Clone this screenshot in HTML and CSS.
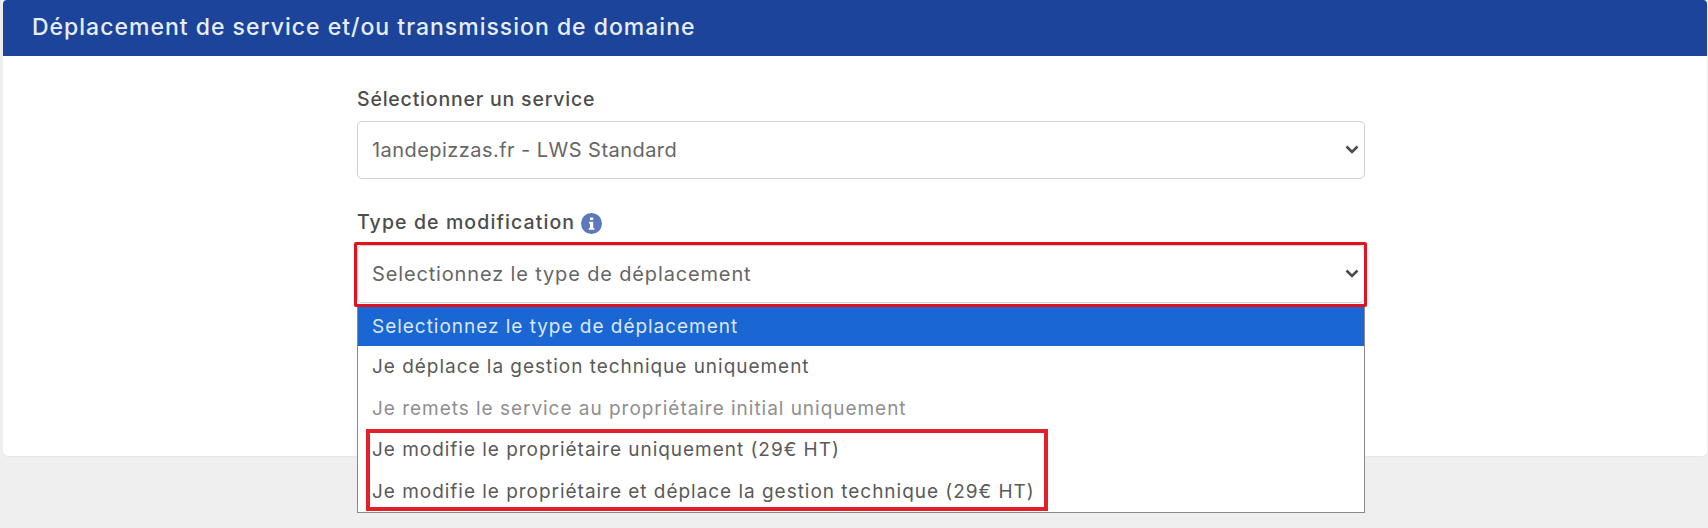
FILE: index.html
```html
<!DOCTYPE html>
<html lang="fr">
<head>
<meta charset="utf-8">
<title>Déplacement de service</title>
<link rel="stylesheet" href="styles.css">
</head>
<body>
<section class="card">
  <h1 class="card-title">Déplacement de service et/ou transmission de domaine</h1>
  <div class="card-body">
    <form class="form">
      <div class="field">
        <label class="label" for="service">Sélectionner un service</label>
        <div class="select-wrap">
          <select class="select select-service" id="service">
            <option>1andepizzas.fr - LWS Standard</option>
          </select>
          <svg class="chevron" viewBox="0 0 14 9" aria-hidden="true"><path d="M1.5 1.5 7 7l5.5-5.5" fill="none" stroke="#4a4a4a" stroke-width="2.6"/></svg>
        </div>
      </div>
      <div class="field field-type">
        <label class="label label-type" for="type">Type de modification
          <svg class="info" viewBox="0 0 22 22" aria-hidden="true"><circle cx="11" cy="11" r="11" fill="#5b78bd"/><path d="M9.4 4.6h3.4v2.8H9.4zM8.6 9.2h4.2v6.4h1.2v2H8.2v-2h1.2v-4.4h-.8z" fill="#fff"/></svg>
        </label>
        <div class="select-wrap">
          <select class="select" id="type">
            <option>Selectionnez le type de déplacement</option>
          </select>
          <svg class="chevron" viewBox="0 0 14 9" aria-hidden="true"><path d="M1.5 1.5 7 7l5.5-5.5" fill="none" stroke="#4a4a4a" stroke-width="2.6"/></svg>
          <span class="highlight highlight-select"></span>
          <ul class="options">
            <li class="option option-active">Selectionnez le type de déplacement</li>
            <li class="option">Je déplace la gestion technique uniquement</li>
            <li class="option option-disabled">Je remets le service au propriétaire initial uniquement</li>
            <li class="option">Je modifie le propriétaire uniquement (29€ HT)</li>
            <li class="option">Je modifie le propriétaire et déplace la gestion technique (29€ HT)</li>
          </ul>
          <span class="highlight highlight-options"></span>
        </div>
      </div>
    </form>
  </div>
</section>
</body>
</html>
```

FILE: styles.css
```css
* { box-sizing: border-box; }
html, body { height: 100%; }
body {
  margin: 0;
  background: #efefef;
  font-family: Inter, "Liberation Sans", sans-serif;
  color: #555;
  overflow: hidden;
}
.card {
  margin: 0 1px 0 3px;
  height: 456px;
  background: #fff;
  border-radius: 0 0 5px 5px;
  box-shadow: 0 1px 1px #e6e6e6;
}
.card-title {
  margin: 0;
  height: 56px;
  padding: 0 0 2px 29px;
  display: flex;
  align-items: center;
  background: #1c449b;
  color: #e6eefa;
  font-size: 23px;
  letter-spacing: 1px;
  font-weight: 500;
  border-radius: 4px 4px 0 0;
}
.card-body { display: flex; justify-content: center; padding: 30px 342px 0 354px; }
.form { width: 100%; }
.field { display: flex; flex-direction: column; }
.field-type { margin-top: 30.5px; }
.label {
  display: flex;
  align-items: center;
  gap: 6px;
  height: 35px;
  padding-bottom: 10px;
  font-size: 19.5px;
  letter-spacing: 0.8px;
  font-weight: 500;
  color: #4d4d4d;
}
.label-type { gap: 6px; letter-spacing: 1.1px; padding-bottom: 11px; }
.info { width: 21px; height: 21px; margin-top: 3px; }
.select {
  display: block;
  width: 100%;
  height: 58px;
  padding: 0 14px;
  border: 1px solid #d0d0d0;
  border-radius: 5px;
  background-color: #fff;
  color: #666;
  font: 400 20px Inter, "Liberation Sans", sans-serif;
  letter-spacing: 0.85px;
  appearance: none;
}
.select-service { letter-spacing: 0.45px; }
.select-wrap { position: relative; }
.chevron {
  position: absolute;
  right: 6px;
  top: 24px;
  width: 14px;
  height: 9px;
  pointer-events: none;
}
.highlight { position: absolute; border: 3px solid #e0131f; pointer-events: none; }
.highlight-select { left: -3px; right: -2px; top: -3px; height: 65px; border-radius: 2px; }
.highlight-options { left: 9px; top: 184px; width: 682px; height: 82px; border-width: 4px; border-color: #e3202a; }
.options {
  position: absolute;
  left: 0; right: 0; top: 62px;
  height: 206px;
  margin: 0;
  padding: 0;
  list-style: none;
  background: #fff;
  border: 1px solid #8a8a8a;
  border-top: 0;
  font-size: 19px;
  letter-spacing: 0.97px;
  color: #5a5a5a;
}
.option { height: 41.5px; padding: 0 14px; display: flex; align-items: center; white-space: nowrap; }
.option-active { background: #1a66d2; color: #dbe8fa; height: 39.5px; }
.option-disabled { color: #8f8f8f; }
```
